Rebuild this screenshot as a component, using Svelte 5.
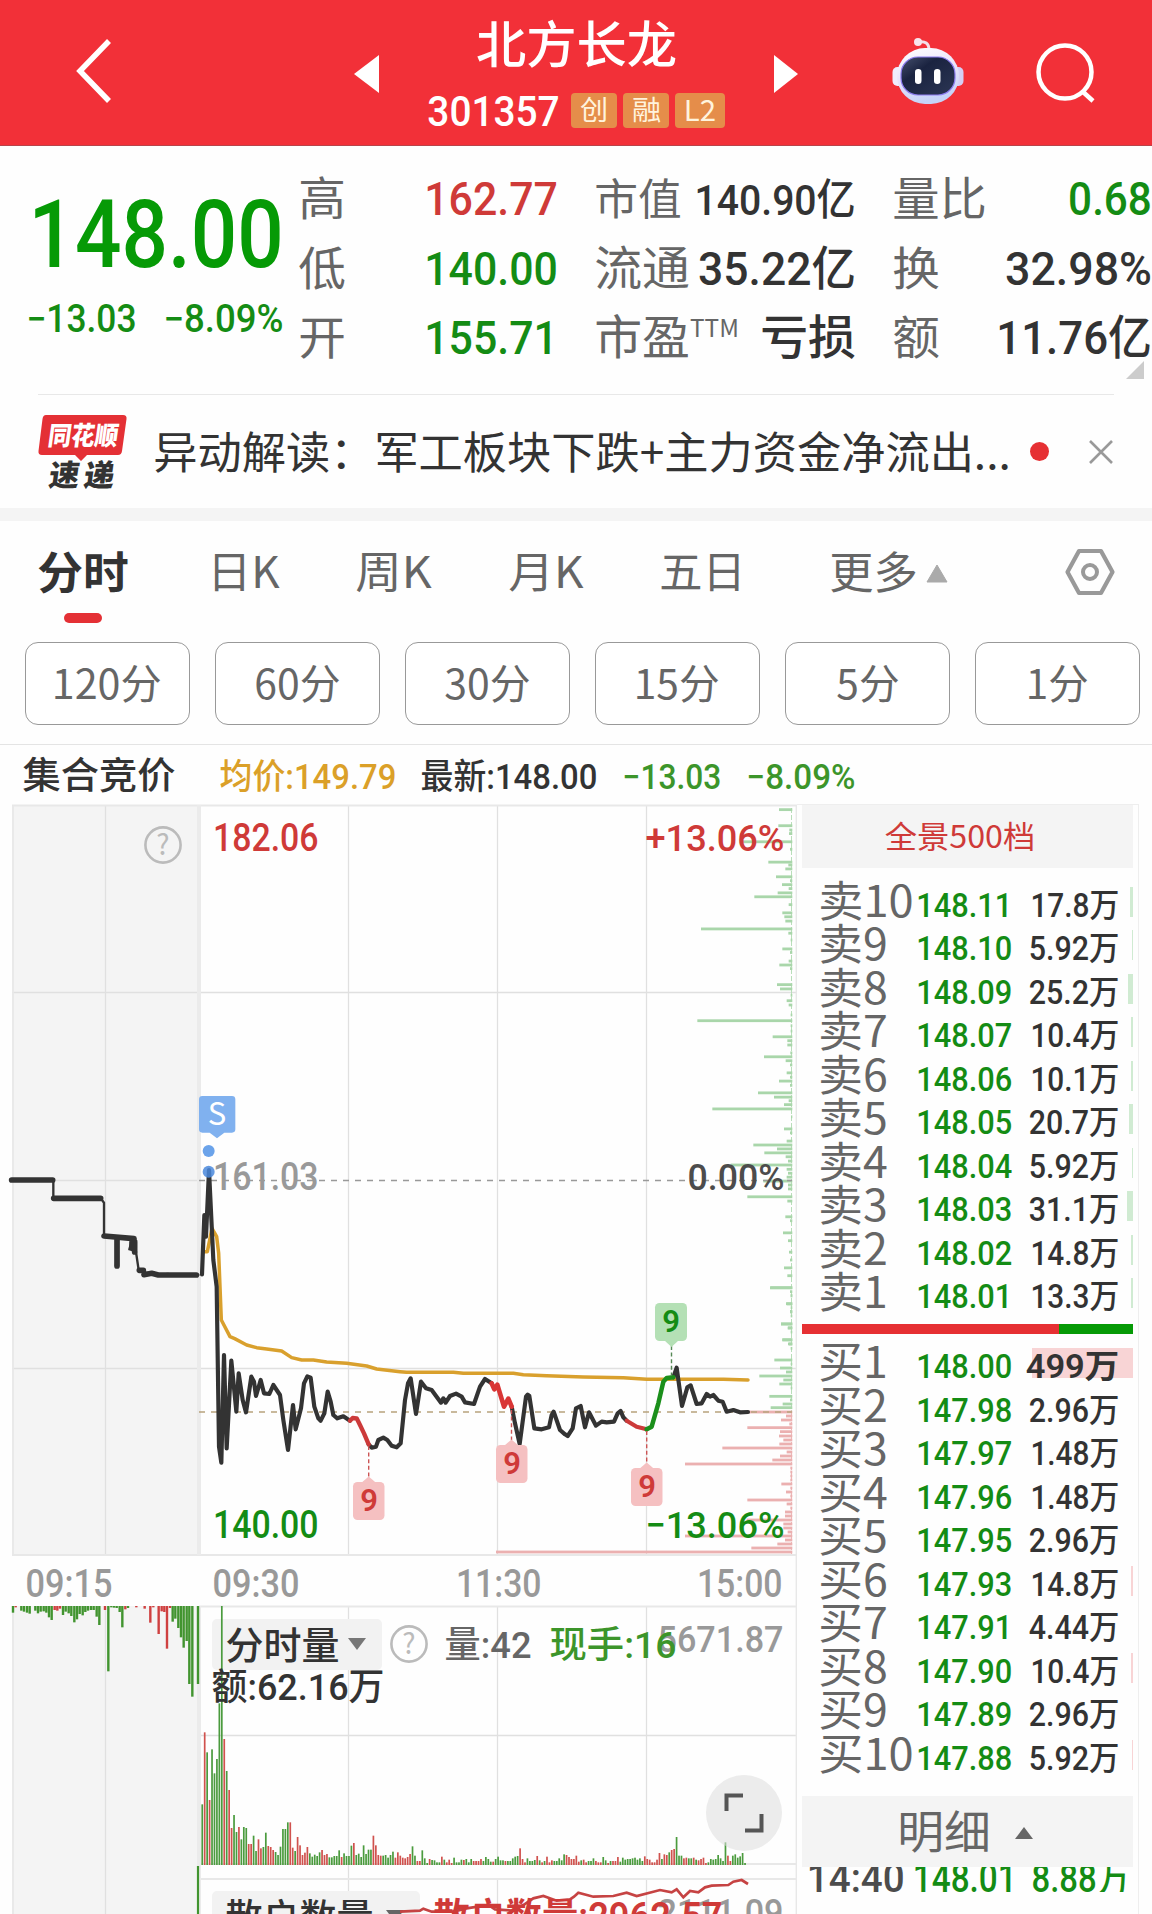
<script>
  let tabs = [
    { name: "日K", w: 69 },
    { name: "周K", w: 73 },
    { name: "月K", w: 72 },
    { name: "五日", w: 83 }
  ];

  let periods = [["120分", 105], ["60分", 83], ["30分", 83], ["15分", 81], ["5分", 60], ["1分", 58]];

  // label, price, volume, width of the depth bar
  let asks = [
    ["卖10", "148.11", "17.8万", 3], ["卖9", "148.10", "5.92万", 1],
    ["卖8", "148.09", "25.2万", 5], ["卖7", "148.07", "10.4万", 2],
    ["卖6", "148.06", "10.1万", 2], ["卖5", "148.05", "20.7万", 4],
    ["卖4", "148.04", "5.92万", 1], ["卖3", "148.03", "31.1万", 6],
    ["卖2", "148.02", "14.8万", 2], ["卖1", "148.01", "13.3万", 2]
  ];
  let bids = [
    ["买1", "148.00", "499万", 101], ["买2", "147.98", "2.96万", 0],
    ["买3", "147.97", "1.48万", 0], ["买4", "147.96", "1.48万", 0],
    ["买5", "147.95", "2.96万", 0], ["买6", "147.93", "14.8万", 2],
    ["买7", "147.91", "4.44万", 0], ["买8", "147.90", "10.4万", 2],
    ["买9", "147.89", "2.96万", 0], ["买10", "147.88", "5.92万", 1]
  ];

  // price lines are kept in thirds of a pixel
  let auction = "30,300 160,300 160,355 302,355 312,368 312,467 330,470 352,475 348,558 354,558 354,472 398,475 388,508 404,475 408,516 416,570 430,573 430,587 440,578 455,583 460,577 475,585 505,582 515,585 595,585";
  let average = "613,515 622,515 636,445 650,470 656,520 664,720 690,770 704,776 740,795 770,803 800,807 845,813 875,833 905,840 940,840 980,846 1040,850 1100,858 1130,867 1200,875 1220,877 1360,877 1390,880 1540,880 1570,884 1640,887 1750,891 1870,893 1940,898 2170,898 2244,900";
  let price1 = "606,583 613,405 618,470 627,270 640,540 650,620 657,1100 664,1148 672,825 680,1105 694,842 709,995 716,880 728,960 738,997 754,890 762,905 768,948 782,900 792,940 808,942 820,915 840,945 850,1020 864,1110 879,975 887,1048 903,985 912,910 922,889 932,893 943,980 955,1015 962,1022 973,1000 983,935 992,965 1000,1005 1012,1015 1030,1009 1050,1022";
  let price2 = "1106,1093 1115,1103 1128,1100 1135,1080 1150,1073 1162,1080 1175,1097 1190,1102 1202,1090 1215,960 1224,910 1232,895 1248,1002 1263,905 1278,925 1295,930 1323,968 1330,955 1337,968 1350,948 1368,941 1385,950 1395,967 1422,972 1440,920 1455,897 1475,910";
  let price3 = "1535,980 1545,1030 1559,1092 1578,950 1583,944 1588,948 1603,1045 1625,1048 1647,1042 1655,1005 1661,995 1680,1050 1695,1063 1703,1068 1718,1045 1728,985 1742,978 1755,1042 1767,997 1788,1037 1805,1025 1820,1027 1842,1025 1853,1000 1862,993 1870,1012 1880,1022";
  let price4 = "2020,892 2030,863 2046,978 2062,922 2072,916 2090,972 2105,970 2120,942 2130,950 2140,945 2155,962 2168,965 2180,995 2200,990 2220,997 2244,996";
  let red1 = "1050,1022 1058,1014 1070,1015 1080,1035 1092,1060 1106,1093";
  let red2 = "1475,910 1483,928 1492,914 1512,980 1525,956 1535,980";
  let red3 = "1880,1022 1910,1040 1940,1048";
  let green1 = "1940,1048 1955,1040 1975,970 1990,905 2000,894 2020,892";
  let retail = "0,965 60,962 70,956 95,965 160,965 200,955 265,945 285,958 340,962 370,945 400,925 430,918 470,932 510,928 522,920 535,908 580,920 640,918 680,908 710,918 780,900 815,907 830,898 850,922 870,903 895,907 915,892 935,887 985,885 1000,875 1025,870 1044,882";

  // [y, left edge] of every chip distribution bar
  let chipsTop = [[55,417],[100,415],[112,448],[122,447],[145,300],[166,450],[202,385],[210,445],[221,436],[243,408],[254,450],[265,426],[276,446],[288,413],[299,343],[321,446],[344,427],[355,433],[367,436],[389,183],[401,445],[420,452],[445,427],[455,450],[479,446],[490,418],[500,450],[545,411],[557,420],[575,452],[590,440],[602,446],[630,452],[646,172],[660,452],[675,452],[691,398],[702,442],[714,442],[736,451],[747,372],[758,437],[770,450],[792,440],[804,450],[815,417],[827,450],[848,354],[860,402],[870,446],[881,432],[893,217],[915,453],[949,432],[960,450],[983,440],[994,340],[1005,411],[1016,373],[1027,437],[1039,444],[1050,272],[1062,440],[1073,444],[1084,440],[1095,370],[1106,444],[1117,444],[1139,322],[1151,442],[1195,436],[1206,450],[1240,429],[1262,444],[1294,447],[1316,450],[1338,432],[1360,442],[1394,390],[1415,452],[1439,440],[1460,450],[1495,423],[1506,444],[1540,427],[1551,444]];
  let chipsMid = [[23,1111],[35,1170],[48,1172],[71,1158],[83,1172],[96,1170],[108,1172],[132,1143],[144,1163],[156,1172],[179,1147],[192,1167],[205,1172],[240,1123],[252,1172],[264,1140],[276,1158],[288,1078],[300,1150],[312,1138],[324,1172],[349,1108],[360,1170],[372,1148],[383,1112]];
  let chipsLow = [[396,1045],[408,1158],[420,1143],[432,1168],[443,1042],[455,1140],[468,1137],[480,1150],[492,1138],[504,967],[516,1160],[528,1140],[540,1117],[552,855],[564,1171],[576,1171],[588,1171],[600,1171],[612,1144],[624,1171],[636,1158],[648,1171],[660,1042],[672,1160],[684,1171],[696,1155],[708,1155],[720,1040],[732,1150],[744,1150],[756,1163],[768,855],[780,1155],[792,1132],[804,1054],[816,288]];

  // bars hanging from the top of the auction volume, minus is red
  let hang = [[39,20],[47,-4],[64,14],[72,17],[81,20],[89,23],[106,14],[114,22],[122,17],[131,16],[139,20],[147,34],[155,42],[164,-12],[172,-14],[180,-8],[189,27],[197,17],[206,22],[214,30],[223,49],[231,40],[239,24],[248,28],[256,18],[264,14],[273,12],[281,12],[290,32],[298,57],[315,-12],[325,196],[334,4],[342,5],[350,6],[359,18],[367,64],[376,-10],[384,6],[409,-4],[434,-8],[451,-50],[460,-4],[476,-84],[485,-16],[493,-18],[501,-128],[510,-6],[518,47],[526,38],[535,66],[543,94],[551,125],[560,105],[568,234],[577,272],[594,234]];

  let vols = [182,-398,338,-195,347,275,318,485,777,-378,282,-225,-111,150,99,-114,77,114,111,-63,-63,88,42,-77,-50,54,97,-57,-54,-45,39,30,55,108,108,128,-128,-52,42,-84,-59,-30,-37,-54,35,25,31,27,38,-45,-30,-33,23,23,27,27,44,-24,35,27,27,58,-66,30,34,24,59,33,46,46,-88,-59,-30,-28,28,30,22,30,40,-22,-38,-28,-22,-20,-24,-33,56,28,-12,-12,44,20,6,-18,15,14,8,8,-25,16,-8,-16,-6,22,8,8,16,-15,18,8,18,-12,-12,-12,-18,12,24,18,10,-10,18,25,14,14,-12,12,12,20,25,27,-50,-18,-8,20,12,12,15,-27,14,-8,12,-25,-8,-14,12,12,20,14,32,-30,-24,-18,-18,-28,-10,14,-16,-8,12,12,20,-12,-8,-8,24,14,-6,12,-12,-12,-24,10,22,16,18,18,20,22,16,20,12,-26,-18,-16,-8,-8,-16,-36,18,-32,-30,38,-45,-48,84,28,28,-20,-22,20,20,-22,16,-14,-18,-22,-6,8,18,16,18,30,20,12,68,-28,-12,28,32,22,26,36,6];

  let flags = [[353, 1482, 368.7, 1446], [496, 1445, 511.5, 1410], [631, 1468, 646.7, 1431]];

  // blank space in front of the first glyph
  let lead = (s, size) => size * (s[0] === "1" ? 0.08 : 0.04);
</script>

{#snippet txt(x, y, s, w, size, cls)}
  <text class={cls} x={x - lead(s, size)} {y} font-size={size} textLength={w + lead(s, size) + size * 0.04} lengthAdjust="spacingAndGlyphs">{s}</text>
{/snippet}

<!-- the box of a word ends on its baseline -->
{#snippet fit(s, w, size, cls)}
  <svg class="word" width={w} height={Math.round(size * 0.72)}>
    {@render txt(0, Math.round(size * 0.72), s, w, size, cls)}
  </svg>
{/snippet}

{#snippet help(x, y)}
  <circle cx={x} cy={y} r="17.6" fill="none" stroke="#bbb" stroke-width="2.6" />
  <text class="gray2" x={x} y={y + 9.5} font-size="28" text-anchor="middle">?</text>
{/snippet}

{#snippet level(row, side)}
  <div class="level">
    <i class={side} style="width: {row[3]}px"></i>
    {@render fit(row[0], row[0].length === 3 ? 92 : 66, 43, "cjk gray")}
    {@render fit(row[1], 92, 34, "num green")}
    {@render fit(row[2], row[3] > 99 ? 91 : /^1/.test(row[2]) ? 85 : 88, 32.5, row[3] > 99 ? "num dark heavy" : "num dark")}
  </div>
{/snippet}

<div class="app">
  <header>
    <svg class="back" width="40" height="66" viewBox="0 0 40 66"><path d="M35 3 L6 33 L35 63" fill="none" stroke="#fff" stroke-width="5.500" /></svg>
    <svg class="prev" width="25" height="38" viewBox="0 0 25 38"><path d="M25 0 V38 L0 19 Z" fill="#fff" /></svg>
    <div class="name">
      {@render fit("北方长龙", 197, 50, "cjk white medium")}
      <div class="code">
        {@render fit("301357", 129, 42, "num white")}
        <span class="badge">{@render fit("创", 26, 27, "cjk cream")}</span>
        <span class="badge">{@render fit("融", 27, 27, "cjk cream")}</span>
        <span class="badge wide">{@render fit("L2", 30, 29, "cjk cream")}</span>
      </div>
    </div>
    <svg class="next" width="25" height="38" viewBox="0 0 25 38"><path d="M0 0 V38 L24 19 Z" fill="#fff" /></svg>
    <svg class="robot" width="74" height="68" viewBox="0 0 74 68">
      <defs>
        <linearGradient id="shell" x1="0" y1="0" x2="0.3" y2="1"><stop offset="0" stop-color="#fff" /><stop offset=".55" stop-color="#e9e3fa" /><stop offset="1" stop-color="#c5d3f8" /></linearGradient>
        <linearGradient id="visor" x1="0" y1="0" x2="1" y2="1"><stop offset="0" stop-color="#46506e" /><stop offset=".35" stop-color="#1a2340" /><stop offset="1" stop-color="#2c3654" /></linearGradient>
      </defs>
      <path d="M27 5 Q38 3 38 13" fill="none" stroke="#f3dfe8" stroke-width="3" />
      <circle cx="27" cy="5" r="4" fill="#f8e4ec" />
      <rect x="1.500" y="30" width="12" height="19" rx="5" fill="#f0ecfc" />
      <rect x="60.500" y="30" width="12" height="19" rx="5" fill="#d5cff4" />
      <rect x="6" y="11" width="62" height="56" rx="28" fill="url(#shell)" />
      <rect x="10" y="20" width="54" height="38" rx="17" fill="url(#visor)" stroke="#8d7df0" stroke-width="1.200" />
      <rect x="24" y="32" width="6.500" height="15" rx="3.200" fill="#fff" />
      <rect x="43" y="32" width="6.500" height="15" rx="3.200" fill="#fff" />
    </svg>
    <svg class="search" width="62" height="62" viewBox="0 0 62 62">
      <circle cx="30" cy="30" r="26.5" fill="none" stroke="#fff" stroke-width="4.500" />
      <path d="M47 49 L58 59" stroke="#fff" stroke-width="4.500" />
    </svg>
  </header>

  <section class="quote">
    <div class="last">
      {@render fit("148.00", 244, 94, "num bright")}
      <div class="change">
        {@render fit("−13.03", 107, 38, "num green")}
        {@render fit("−8.09%", 117, 38, "num green")}
      </div>
    </div>
    <div class="cell c1">{@render fit("高", 44, 46, "cjk gray")}{@render fit("162.77", 128, 47, "num red")}</div>
    <div class="cell c2">{@render fit("市值", 84, 43, "cjk gray")}{@render fit("140.90亿", 156, 43, "num dark")}</div>
    <div class="cell c3">{@render fit("量比", 91, 46, "cjk gray")}{@render fit("0.68", 80, 47, "num green")}</div>
    <div class="cell c1">{@render fit("低", 44, 46, "cjk gray")}{@render fit("140.00", 128, 47, "num green")}</div>
    <div class="cell c2">{@render fit("流通", 92, 47, "cjk gray")}{@render fit("35.22亿", 154, 47, "num dark")}</div>
    <div class="cell c3">{@render fit("换", 44, 46, "cjk gray")}{@render fit("32.98%", 143, 47, "num dark")}</div>
    <div class="cell c1">{@render fit("开", 44, 46, "cjk gray")}{@render fit("155.71", 128, 47, "num green")}</div>
    <div class="cell c2">
      <span class="ttm">{@render fit("市盈", 92, 47, "cjk gray")}{@render fit("TTM", 47, 24, "cjk gray")}</span>
      {@render fit("亏损", 92, 47, "cjk dark medium")}
    </div>
    <div class="cell c3">{@render fit("额", 44, 46, "cjk gray")}{@render fit("11.76亿", 150, 47, "num dark")}</div>
    <svg class="corner" width="18" height="18"><path d="M18 0 V18 H0 Z" fill="#ccc" /></svg>
  </section>

  <section class="news">
    <svg width="90" height="76" viewBox="0 0 90 76">
      <path d="M8 1 H85 Q89 1 88.500 5 L84 37 Q83.500 41 80 41 H49 L43 47 L37 41 H4 Q0 41 .500 37 L4.500 5 Q5 1 8 1 Z" fill="#e43035" />
      <g transform="translate(9 31) skewX(-8)">{@render txt(1, 0, "同花顺", 68, 26, "cjk white black")}</g>
      <g transform="translate(11 72) skewX(-8)">{@render txt(0, 0, "速", 28, 30, "cjk dark black")}{@render txt(35, 0, "递", 28, 30, "cjk dark black")}</g>
    </svg>
    {@render fit("异动解读：军工板块下跌+主力资金净流出...", 854, 44, "cjk dark")}
    <i class="dot"></i>
    <svg width="26" height="26"><path d="M2 2 L24 24 M24 2 L2 24" stroke="#999" stroke-width="2.600" /></svg>
  </section>

  <nav class="tabs">
    <div class="active">{@render fit("分时", 88, 44, "cjk dark bold")}<i></i></div>
    {#each tabs as tab}
      {@render fit(tab.name, tab.w, 43, "cjk gray")}
    {/each}
    <div class="more">
      {@render fit("更多", 85, 44, "cjk gray")}
      <svg width="22" height="19"><path d="M11 1 L21 18 H1 Z" fill="#aaa" stroke="#aaa" stroke-linejoin="round" /></svg>
    </div>
    <svg class="gear" width="50" height="48" viewBox="0 0 50 48">
      <path d="M14 3 H36 L47.500 24 L36 45 H14 L2.500 24 Z" fill="none" stroke="#999" stroke-width="4.200" stroke-linejoin="round" />
      <circle cx="25" cy="24" r="7" fill="none" stroke="#999" stroke-width="4" />
    </svg>
  </nav>

  <div class="periods">
    {#each periods as p}
      <button>{@render fit(p[0], p[1], 41, "cjk gray")}</button>
    {/each}
  </div>

  <div class="info">
    {@render fit("集合竞价", 150, 37, "cjk dark medium")}
    {@render fit("均价:149.79", 174, 35, "num orange")}
    {@render fit("最新:148.00", 174, 35, "num dark")}
    {@render fit("−13.03", 96, 35, "num leaf")}
    {@render fit("−8.09%", 106, 35, "num leaf")}
  </div>

  <main>
    <svg class="chart" width="797" height="1110" viewBox="0 804 797 1110">
      <rect x="12" y="805" width="187" height="750" fill="#f4f4f4" />
      <rect x="12" y="1606" width="187" height="308" fill="#f4f4f4" />
      <g stroke="#e0e0e0" stroke-width="1.300">
        <path d="M105.500 805 V1555 M348.500 805 V1555 M497.500 805 V1555 M646.500 805 V1555 M12 992.500 H796 M12 1180.500 H199 M12 1368.500 H796 M348.500 1606 V1914 M497.500 1606 V1864 M646.500 1606 V1864 M497.500 1879 V1914 M646.500 1879 V1914 M105.500 1606 V1914 M199 1735.500 H796" />
      </g>
      <path d="M12 805.500 H797 M12 1555 H797 M199 1606.500 H797 M199 1864 H797 M199 1879 H797 M13 805 V1555 M13 1606 V1914 M796.500 805 V1914" fill="none" stroke="#e8e8e8" stroke-width="1.800" />
      <path d="M199 805 V1555 M199 1606 V1914" stroke="#ebebeb" stroke-width="4" />

      <path d="M791.500 808 V1411" stroke="#b9deba" stroke-width="1" stroke-dasharray="5 2" />
      <path d="M791.500 1412 V1554" stroke="#efb9b9" stroke-width="1" stroke-dasharray="3 2" />
      {#each chipsTop as c}
        <rect x={640 + c[1] / 3} y={788.6 + c[0] / 2.8} width={152.3 - c[1] / 3} height="2.800" fill="#a9d6aa" />
      {/each}
      {#each chipsMid as c}
        <rect x={400 + c[1] / 3} y={1278.6 + c[0] / 3} width={392.3 - c[1] / 3} height="2.800" fill="#a9d6aa" />
      {/each}
      {#each chipsLow as c}
        <rect x={400 + c[1] / 3} y={1278.6 + c[0] / 3} width={392.3 - c[1] / 3} height="2.800" fill="#ebb0b0" />
      {/each}

      <path d="M199 1180.500 H792" stroke="#999" stroke-width="1.600" stroke-dasharray="6 6" />
      <path d="M199 1412 H792" stroke="#b8a27c" stroke-width="1.600" stroke-dasharray="6 6" />

      {@render help(163, 845)}
      {@render txt(216, 851, "182.06", 101, 38, "num red")}
      {@render txt(216, 1190, "161.03", 101, 38, "num silver")}
      {@render txt(216, 1538, "140.00", 101, 38, "num green")}
      {@render txt(647, 851, "+13.06%", 136, 37, "num red")}
      {@render txt(689, 1190, "0.00%", 94, 37, "num slate")}
      {@render txt(647, 1538, "−13.06%", 136, 37, "num green")}

      <g transform="translate(0 1080) scale(0.333333)" fill="none" stroke-linejoin="round" stroke-linecap="round" stroke-width="12.500">
        <polyline points={average} stroke="#d9a02d" stroke-width="10.500" />
        <polyline points={auction} stroke="#333" stroke-width="7" />
        <path d="M35 300 H158 M161 355 H302 M312 468 L402 476 M351 480 V558 M396 476 V505 M404 485 V516 M418 571 H430 M432 584 L455 580 L475 585 H589" stroke="#333" stroke-width="17" />
        <polyline points={price1} stroke="#333" />
        <polyline points={price2} stroke="#333" />
        <polyline points={price3} stroke="#333" />
        <polyline points={price4} stroke="#333" />
        <polyline points={red1} stroke="#cc3a3a" stroke-width="13" />
        <polyline points={red2} stroke="#d93636" stroke-width="14" />
        <polyline points={red3} stroke="#cc3a3a" />
        <polyline points={green1} stroke="#1b8f1b" stroke-width="13.500" />
        <circle cx="626" cy="213" r="18" fill="#6ba3ea" stroke="none" />
        <circle cx="626" cy="275" r="18" fill="#4a88dc" fill-opacity=".85" stroke="none" />
        <path d="M607 48 H696 Q706 48 706 58 V148 Q706 158 696 158 H673 L651 175 L629 158 H607 Q597 158 597 148 V58 Q597 48 607 48 Z" fill="#80b1ef" stroke="none" />
      </g>
      <text class="cjk white" x="217" y="1125" font-size="31" text-anchor="middle">S</text>

      {#each flags as f}
        <path d="M{f[2]} {f[3]} V{f[1] - 5}" stroke="#c55" stroke-width="1.400" stroke-dasharray="4 2.600" />
        <path d="M{f[2] - 7} {f[1] + 0.5} L{f[2]} {f[1] - 5.5} L{f[2] + 7} {f[1] + 0.5} Z" fill="#f5c0c1" />
        <rect x={f[0]} y={f[1]} width="31.500" height="38" rx="4.500" fill="#f5c0c1" />
        <text class="num red heavy" x={f[0] + 16} y={f[1] + 29} font-size="31" text-anchor="middle">9</text>
      {/each}
      <path d="M671.500 1346 V1376" stroke="#585" stroke-width="1.400" stroke-dasharray="4 2.600" />
      <path d="M664 1340 L671.500 1347 L679 1340 Z" fill="#b4e0b5" />
      <rect x="655" y="1303" width="32" height="38" rx="4.500" fill="#b4e0b5" />
      <text class="num green heavy" x="671" y="1332" font-size="31" text-anchor="middle">9</text>

      {@render txt(27, 1597, "09:15", 84, 38, "num silver")}
      {@render txt(214, 1597, "09:30", 84, 38, "num silver")}
      {@render txt(459, 1597, "11:30", 81, 38, "num silver")}
      {@render txt(700, 1597, "15:00", 81, 38, "num silver")}

      {#each hang as h}
        <rect x={h[0] / 3 - 1.2} y="1606" width="2.400" height={Math.abs(h[1]) / 3} fill={h[1] > 0 ? "#41942f" : "#cf4040"} />
      {/each}
      <path d="M198 1866 V1914" stroke="#41942f" stroke-width="2.200" />

      <rect x="212" y="1619" width="170" height="51" rx="5" fill="#f2f2f2" />
      {#each vols as v, i}
        <rect x={201.4 + i * 2.445} y={1865 - Math.abs(v) / 3} width="1.700" height={Math.abs(v) / 3} fill={v > 0 ? "#4b9b3e" : "#d0524e"} />
      {/each}
      {@render txt(227, 1659, "分时量", 111, 38, "cjk dark medium")}
      <path d="M348 1638 H366 L357 1650 Z" fill="#777" />
      {@render help(409, 1644)}
      {@render txt(446, 1658, "量:42", 84, 37, "num gray")}
      {@render txt(659, 1652, "5671.87", 123, 37, "num silver")}
      {@render txt(551, 1658, "现手:16", 124, 37, "num leaf")}
      {@render txt(213, 1700, "额:62.16万", 170, 37, "num dark")}

      <circle cx="744" cy="1813" r="38" fill="#ddd" fill-opacity=".55" />
      <path d="M726.500 1811 V1795.500 H743 M745 1830.500 H761.500 V1814" fill="none" stroke="#555" stroke-width="4" />

      <rect x="212" y="1891" width="208" height="40" rx="5" fill="#f2f2f2" />
      {@render txt(227, 1931, "散户数量", 145, 38, "cjk dark medium")}
      <path d="M386 1910 H404 L395 1922 Z" fill="#666" />
      {@render txt(659, 1925, "2111.09", 123, 37, "num silver")}
      <polyline points={retail} transform="translate(400 1590) scale(0.333333)" fill="none" stroke="#c64343" stroke-width="8" />
      {@render txt(435, 1930, "散户数量:2962.57", 286, 38, "num red heavy")}
    </svg>

    <aside>
      <div class="all">{@render fit("全景500档", 148, 31, "cjk red")}</div>
      <div class="levels asks">
        {#each asks as row}
          {@render level(row, "sell")}
        {/each}
      </div>
      <div class="ratio"><i></i></div>
      <div class="levels bids">
        {#each bids as row}
          {@render level(row, "buy")}
        {/each}
      </div>
      <div class="detail">
        {@render fit("明细", 90, 45, "cjk gray")}
        <svg width="18" height="12"><path d="M9 0 L18 12 H0 Z" fill="#666" /></svg>
      </div>
      <div class="trade">
        {@render fit("14:40", 93, 40, "num slate")}
        {@render fit("148.01", 99, 40, "num green")}
        {@render fit("8.88万", 95, 38, "num green")}
      </div>
    </aside>
  </main>
</div>

<style>
  :global(body) {
    margin: 0;
    background: #fff;
  }
  .app {
    width: 1152px;
    height: 1914px;
    overflow: hidden;
    background: #fefefe;
  }
  svg {
    display: block;
    flex: none;
  }
  .word {
    overflow: visible;
  }

  /* text styles */
  .num {
    font-family: Roboto, "Noto Sans CJK SC", sans-serif;
    font-weight: 500;
  }
  .cjk {
    font-family: "Noto Sans CJK SC", sans-serif;
    font-weight: 400;
  }
  .medium { font-weight: 500; }
  .bold { font-weight: 700; }
  .heavy { font-weight: 600; }
  .black { font-weight: 900; }
  .white { fill: #fff; }
  .cream { fill: #fff3dd; }
  .gray { fill: #666; }
  .gray2 { fill: #bbb; font-family: "Noto Sans CJK SC", sans-serif; }
  .silver { fill: #999; }
  .slate { fill: #4c4c4c; }
  .dark { fill: #333; }
  .red { fill: #cf3a38; }
  .green { fill: #148c14; }
  .bright { fill: #069a06; }
  .leaf { fill: #3c952a; }
  .orange { fill: #dba028; }

  header {
    display: flex;
    align-items: flex-start;
    height: 146px;
    box-sizing: border-box;
    border-bottom: 1px solid #b8444a;
    background: #f23038;
  }
  .back { margin: 38px 0 0 74px; }
  .prev { margin: 55px 0 0 240px; }
  .name { margin: 27px 0 0 50px; width: 297px; }
  .name > .word { margin-left: 49px; }
  .code {
    display: flex;
    align-items: center;
    margin-top: 30px;
    gap: 6px;
  }
  .code > .word { margin-right: 7px; }
  .badge {
    display: flex;
    align-items: center;
    justify-content: center;
    width: 46px;
    height: 35px;
    border-radius: 4px;
    background: #e58d4a;
  }
  .wide { width: 50px; }
  .next { margin: 55px 0 0 48px; }
  .robot { margin: 37px 0 0 92px; }
  .search { margin: 42px 0 0 70px; }

  .quote {
    position: relative;
    display: grid;
    grid-template-columns: 300px 256px 257px 256px;
    grid-template-rows: 69px 70px 69px;
    height: 248px;
    box-sizing: border-box;
  }
  .last {
    grid-row: 1 / 4;
    padding: 53px 0 0 36px;
  }
  .change {
    display: flex;
    gap: 30px;
    margin: 38px 0 0 -8px;
  }
  .cell {
    display: flex;
    align-items: flex-end;
    justify-content: space-between;
  }
  .c2 { margin-left: 40px; margin-right: -41px; }
  .c3 { margin-left: 81px; margin-right: -81px; }
  .ttm {
    display: flex;
    gap: 3px;
  }
  .corner {
    position: absolute;
    right: 8px;
    bottom: 15px;
  }

  .news {
    display: flex;
    align-items: center;
    height: 113px;
    margin: 0 38px;
    border-top: 1px solid #e8e8e8;
  }
  .news .word { margin: 3px 21px 0 27px; }
  .dot {
    width: 19px;
    height: 19px;
    margin-right: 39px;
    border-radius: 50%;
    background: #e63033;
  }

  .tabs {
    display: flex;
    align-items: flex-start;
    height: 134px;
    padding: 36px 37px 0 39px;
    box-sizing: border-box;
    border-top: 13px solid #f4f4f4;
  }
  .tabs > .word { margin-left: 79.5px; }
  .active { width: 90px; }
  .active i {
    display: block;
    width: 38px;
    height: 10px;
    margin: 24px 0 0 25px;
    border-radius: 5px;
    background: #e43035;
  }
  .more {
    display: flex;
    gap: 10px;
    align-items: center;
    margin-left: 87px;
  }
  .gear { margin: -9px 0 0 auto; }

  .periods {
    display: flex;
    gap: 25px;
    padding: 0 0 0 25px;
    height: 102px;
    border-bottom: 1px solid #e4e4e4;
  }
  .periods button {
    display: flex;
    align-items: center;
    justify-content: center;
    width: 165px;
    height: 83px;
    padding: 1px 0 0;
    border: 1px solid #999;
    border-radius: 13px;
    background: #fff;
  }

  .info {
    display: grid;
    grid-template-columns: 197px 201px 202px 124px 106px;
    align-items: end;
    height: 44px;
    margin: 0 0 15px 24px;
  }

  main {
    display: flex;
  }
  aside {
    width: 331px;
    height: 1110px;
    padding: 0 5px;
    border-right: 1px solid #eee;
    border-top: 1px solid #eee;
    box-sizing: content-box;
  }
  .all {
    display: flex;
    align-items: center;
    justify-content: center;
    height: 63px;
    box-sizing: border-box;
    padding-right: 15px;
    background: #f4f4f4;
  }
  .level {
    position: relative;
    display: grid;
    grid-template-columns: 99px 110px 89px;
    align-items: end;
    height: 43.55px;
    padding-left: 18px;
  }
  .level :global(svg) { position: relative; }
  .level :global(svg:last-child) { justify-self: end; }
  .level i {
    position: absolute;
    right: 0;
    bottom: 0;
    height: 30px;
  }
  .sell { background: #d0ebd2; }
  .buy { background: #f8d4d5; }
  .asks { padding-top: 5px; }
  .ratio {
    height: 10px;
    margin: 16px 0 0;
    background: #069a06;
  }
  .ratio i {
    display: block;
    width: 257px;
    height: 10px;
    background: #e63033;
  }
  .detail {
    display: flex;
    align-items: center;
    justify-content: center;
    gap: 26px;
    height: 71px;
    margin-top: 26px;
    padding: 4px 4px 0 0;
    box-sizing: border-box;
    background: #f4f4f4;
  }
  .trade {
    display: flex;
    align-items: flex-end;
    gap: 13px;
    height: 25px;
    padding-left: 8px;
    overflow: hidden;
  }
  .trade :global(svg:last-child) { margin-left: 5px; }
</style>
